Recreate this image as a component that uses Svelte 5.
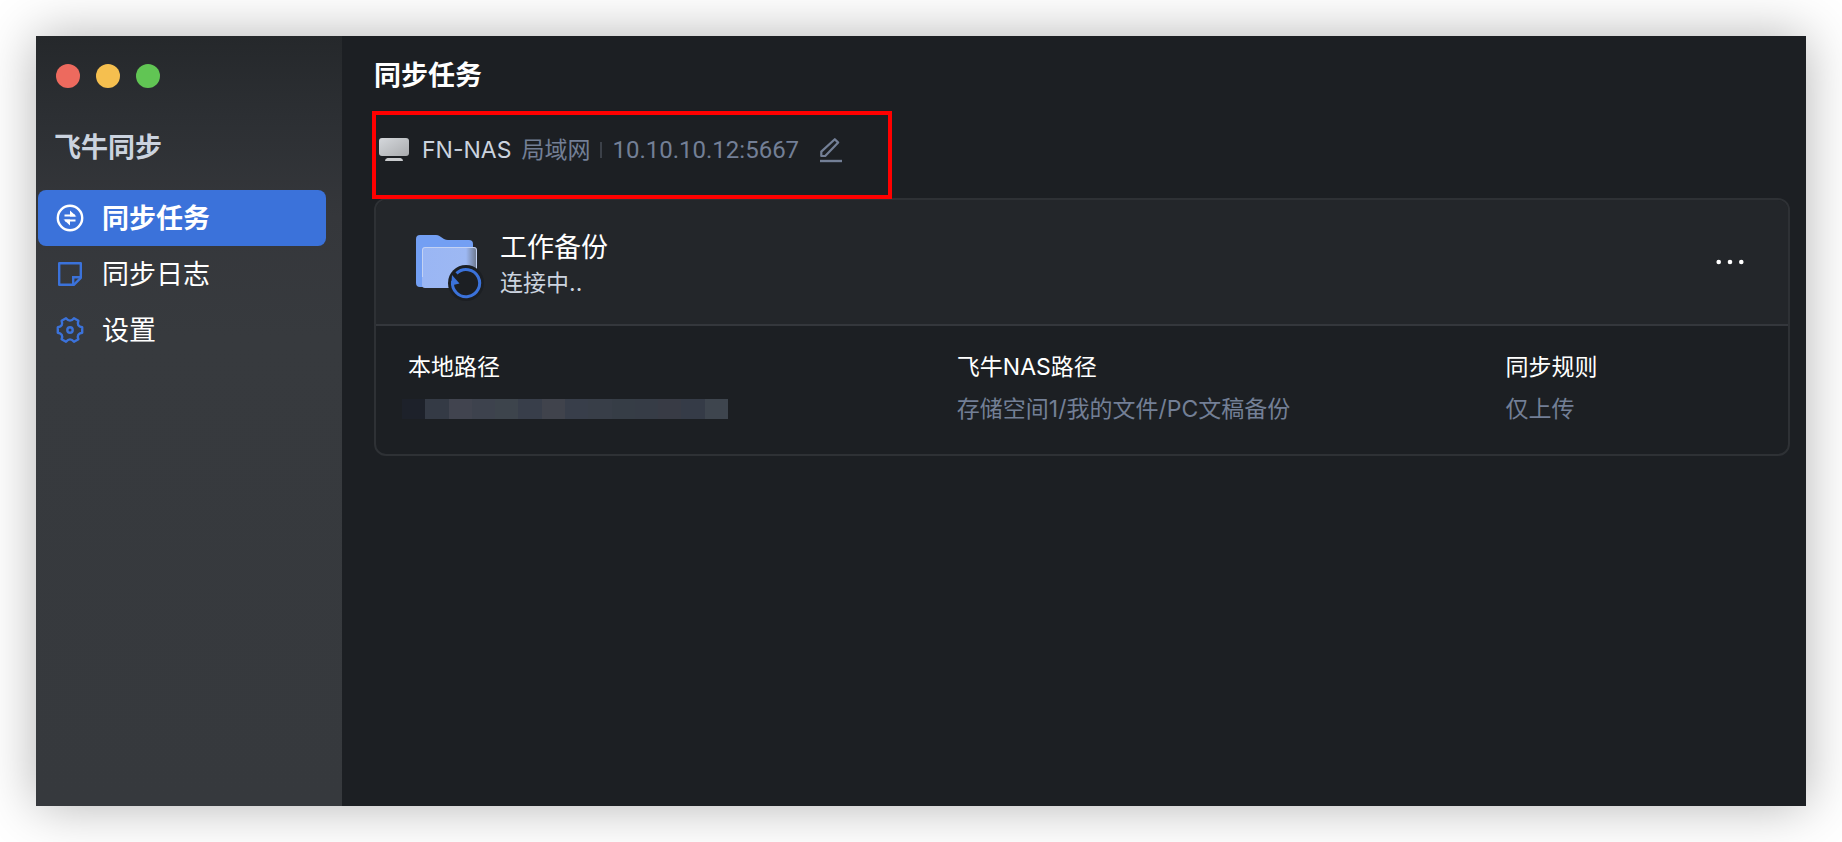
<script>
  let active = $state('tasks');

  const nav = [
    { id: 'tasks', label: '同步任务' },
    { id: 'logs', label: '同步日志' },
    { id: 'settings', label: '设置' },
  ];

  const device = { name: 'FN-NAS', network: '局域网', address: '10.10.10.12:5667' };

  const task = {
    name: '工作备份',
    status: '连接中..',
    remotePath: '存储空间1/我的文件/PC文稿备份',
    rule: '仅上传',
  };

  // masked local path, one colour per block
  const mask = [
    '#1d212a', '#343a45', '#41444f', '#3d424d', '#3d444c', '#383e4a', '#40434c',
    '#383e4a', '#383e48', '#363d46', '#363c46', '#383b45', '#353b47', '#3e454e',
  ];
</script>

<div class="page">
  <div class="window">
    <aside class="sidebar">
      <div class="lights">
        <button class="light red" aria-label="关闭"></button>
        <button class="light yellow" aria-label="最小化"></button>
        <button class="light green" aria-label="最大化"></button>
      </div>
      <div class="brand">飞牛同步</div>
      <nav>
        {#each nav as item (item.id)}
          <button class="nav-item" class:active={active === item.id} onclick={() => (active = item.id)}>
            <svg width="28" height="28" viewBox="0 0 28 28" fill="none" stroke="currentColor" stroke-width="2.4" aria-hidden="true">
              {#if item.id === 'tasks'}
                <circle cx="14" cy="14" r="12.2" />
                <path d="M8.500 11.500H19M9 16.500H19.500" stroke-width="2.200" />
                <path d="M14 6.500V12.600H20.500zM14 21.500V15.400H7.500z" fill="currentColor" stroke="none" />
              {:else if item.id === 'logs'}
                <path d="M3.200 3.200H24.800V17.800L17.800 24.800H3.200Z" stroke-linejoin="round" />
                <path d="M17.200 25V17.200H25" />
              {:else}
                <path d="M10 2.200Q14 7 18 2.200L22.400 4.800Q20.200 10.400 26.200 11.300V16.700Q20.200 17.600 22.400 23.200L18 25.800Q14 21 10 25.800L5.600 23.200Q7.800 17.600 1.800 16.700V11.300Q7.800 10.400 5.600 4.800Z" stroke-linejoin="round" />
                <circle cx="14" cy="14" r="2.700" />
              {/if}
            </svg>
            <span>{item.label}</span>
          </button>
        {/each}
      </nav>
    </aside>

    <main class="content">
      <h1>同步任务</h1>

      <section class="device">
        <svg width="32" height="32" viewBox="0 0 32 32" aria-hidden="true">
          <defs>
            <linearGradient id="screen" x1="0" y1="0" x2="1" y2="1">
              <stop offset="0" stop-color="#d5d8dc" />
              <stop offset="1" stop-color="#a9abae" />
            </linearGradient>
          </defs>
          <rect x="1" y="4" width="30" height="18" rx="3" fill="url(#screen)" />
          <path d="M9.5 24H22.5Q25 24.4 25 27H7Q7 24.4 9.5 24Z" fill="#c9cbce" />
        </svg>
        <span class="device-name">{device.name}</span>
        <span class="muted">{device.network}</span>
        <span class="bar"></span>
        <span class="muted address">{device.address}</span>
        <button class="icon-btn edit" aria-label="编辑">
          <svg width="24" height="26" viewBox="0 0 24 26" fill="none" stroke="currentColor" stroke-width="2.200" aria-hidden="true">
            <path d="M2.3 19V14.6L15.8 2.2L19.2 5.6L6.2 19Z" stroke-linejoin="round" />
            <path d="M1 24H23" stroke-width="2.400" />
          </svg>
        </button>
      </section>

      <article class="card">
        <header class="card-head">
          <svg class="folder" width="70" height="68" viewBox="0 0 70 68" aria-hidden="true">
            <defs>
              <linearGradient id="front" x1="0" y1="0" x2="1" y2="0">
                <stop offset="0" stop-color="#9ab6f4" />
                <stop offset="0.8" stop-color="#9db8f3" />
                <stop offset="1" stop-color="#6c7688" />
              </linearGradient>
            </defs>
            <path d="M4 2H20Q22 2 23.500 3L28 6Q30 7 32 7H53Q57 7 57 11V54H4Q0 54 0 50V6Q0 2 4 2Z" fill="#739ff3" />
            <rect x="6" y="14" width="55" height="41" rx="3" fill="url(#front)" />
            <path d="M6.500 44V17Q6.500 14.500 9 14.500H58Q60.500 14.500 60.500 17V36" fill="none" stroke="#c3d2f3" />
            <circle cx="50" cy="50" r="18" fill="#1c1f23" />
            <path d="M40.500 40.400A13.600 13.600 0 1 1 36.600 48" fill="none" stroke="#3b72da" stroke-width="3" />
            <path d="M36 42L43.500 50.500L35.200 52.500Z" fill="#3b72da" />
          </svg>
          <div class="summary">
            <h2>{task.name}</h2>
            <p>{task.status}</p>
          </div>
          <button class="icon-btn" aria-label="更多">
            <svg width="30" height="30" viewBox="0 0 30 30" fill="currentColor" aria-hidden="true">
              <circle cx="3.700" cy="15" r="2.300" />
              <circle cx="15" cy="15" r="2.300" />
              <circle cx="26.300" cy="15" r="2.300" />
            </svg>
          </button>
        </header>

        <dl class="details">
          <div>
            <dt>本地路径</dt>
            <dd class="mask" aria-label="已隐藏">
              {#each mask as color}
                <span style="background: {color}"></span>
              {/each}
            </dd>
          </div>
          <div>
            <dt>飞牛NAS路径</dt>
            <dd>{task.remotePath}</dd>
          </div>
          <div>
            <dt>同步规则</dt>
            <dd>{task.rule}</dd>
          </div>
        </dl>
      </article>
    </main>
  </div>
</div>

<style>
  :global(body) { margin: 0; background: #fff; }
  .page {
    min-height: 100vh; box-sizing: border-box; padding: 36px; display: flex;
    font-family: Inter, "Noto Sans CJK SC", sans-serif; font-size: 23px; line-height: 32px; color: #fff;
  }
  button { font: inherit; color: inherit; background: none; border: 0; padding: 0; cursor: pointer; }
  h1, h2, p, dl, dd { margin: 0; }
  svg { display: block; flex: none; }

  .window { flex: 1; display: flex; background: #1c1f23; box-shadow: 0 0 50px rgba(0, 0, 0, 0.3); }
  .sidebar { flex: 0 0 306px; background: linear-gradient(#25282b, #2c2f33 80px, #35373b 180px, #373a3e 300px, #36393d); }
  .lights { display: flex; gap: 16px; padding: 28px 20px 0; }
  .light { width: 24px; height: 24px; border-radius: 50%; }
  .red { background: #ed6a5e; }
  .yellow { background: #f5bf4f; }
  .green { background: #61c554; }
  .brand { padding: 41px 18px 23px; font-size: 27px; line-height: 38px; font-weight: 700; color: #cbd3df; }
  nav { display: flex; flex-direction: column; padding: 0 16px 0 2px; }
  .nav-item {
    display: flex; align-items: center; gap: 18px; height: 56px; padding: 0 18px;
    border-radius: 8px; font-size: 27px; line-height: 38px; text-align: left;
  }
  .nav-item span { padding-top: 2px; }
  .nav-item svg { color: #3b72da; }
  .nav-item.active { background: #3b72da; font-weight: 700; }
  .nav-item.active svg { color: #fff; }

  .content { flex: 1; min-width: 0; padding: 21px 16px 0 32px; }
  h1 { font-size: 27px; line-height: 38px; font-weight: 700; }
  .device {
    position: relative; z-index: 1; display: flex; align-items: center; box-sizing: border-box;
    width: 520px; height: 88px; margin: 16px 0 -1px -2px; padding: 0 0 10px 2px; border: 4px solid #f00;
  }
  .device-name { margin: 0 10px 0 12px; color: #cbd3df; }
  .muted { color: #737f96; }
  .address { font-family: Roboto, sans-serif; font-size: 24px; }
  .bar { width: 2px; height: 16px; margin: 0 10px; background: #3b4048; }
  .edit { margin-left: 20px; color: #737f96; }

  .card { border: 2px solid #2e3135; border-radius: 12px; overflow: hidden; }
  .card-head {
    display: flex; align-items: center; height: 124px; padding: 0 43px 0 40px;
    background: #23262a; border-bottom: 2px solid #34373c;
  }
  .folder { margin-top: 10px; }
  .summary { flex: 1; margin-left: 14px; padding-top: 4px; }
  .summary h2 { font-size: 27px; line-height: 38px; font-weight: 400; }
  .summary p { color: #cbd3df; }
  .details { display: grid; grid-template-columns: 2fr 2fr 1fr; padding: 25px 8px 29px 32px; }
  dd { margin-top: 10px; color: #737f96; }
  .mask { display: flex; width: 326px; height: 20px; margin: 16px 0 0 -6px; }
  .mask span { flex: 1; }
</style>
